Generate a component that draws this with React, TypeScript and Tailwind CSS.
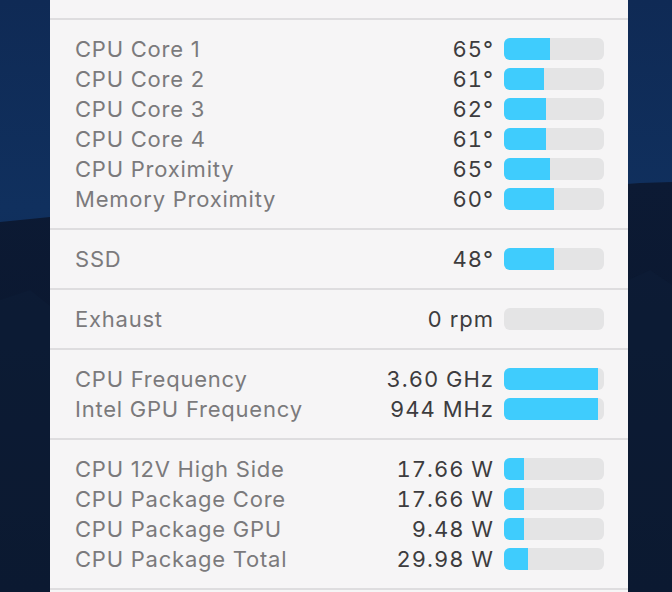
type Row = { label: string; value: string; fill: number };

const sections: Row[][] = [
  [
    { label: "CPU Core 1", value: "65°", fill: 46 },
    { label: "CPU Core 2", value: "61°", fill: 40 },
    { label: "CPU Core 3", value: "62°", fill: 42 },
    { label: "CPU Core 4", value: "61°", fill: 42 },
    { label: "CPU Proximity", value: "65°", fill: 46 },
    { label: "Memory Proximity", value: "60°", fill: 50 },
  ],
  [{ label: "SSD", value: "48°", fill: 50 }],
  [{ label: "Exhaust", value: "0 rpm", fill: 0 }],
  [
    { label: "CPU Frequency", value: "3.60 GHz", fill: 94 },
    { label: "Intel GPU Frequency", value: "944 MHz", fill: 94 },
  ],
  [
    { label: "CPU 12V High Side", value: "17.66 W", fill: 20 },
    { label: "CPU Package Core", value: "17.66 W", fill: 20 },
    { label: "CPU Package GPU", value: "9.48 W", fill: 20 },
    { label: "CPU Package Total", value: "29.98 W", fill: 24 },
  ],
];

function Wallpaper() {
  return (
    <svg
      className="absolute inset-0 h-full w-full"
      viewBox="0 0 672 592"
      preserveAspectRatio="none"
    >
      <defs>
        <linearGradient id="sky" x1="0" y1="0" x2="0" y2="1">
          <stop offset="0" stopColor="#0f2a55" />
          <stop offset="0.35" stopColor="#10305e" />
          <stop offset="1" stopColor="#0c2246" />
        </linearGradient>
        <linearGradient id="ridge" x1="0" y1="0" x2="0" y2="1">
          <stop offset="0" stopColor="#0c1a34" />
          <stop offset="1" stopColor="#09152a" />
        </linearGradient>
      </defs>
      <rect width="672" height="592" fill="url(#sky)" />
      <path
        d="M0 222 L20 220 L40 218 L60 216 L300 200 L600 186 L640 183 L672 182 L672 592 L0 592 Z"
        fill="url(#ridge)"
      />
      <path d="M0 300 L30 290 L55 310 L55 592 L0 592 Z" fill="#0e1d38" opacity="0.5" />
      <path d="M628 280 L650 270 L672 285 L672 592 L628 592 Z" fill="#0e1d38" opacity="0.5" />
    </svg>
  );
}

function Bar({ fill }: { fill: number }) {
  return (
    <div className="h-[22px] w-[100px] shrink-0 overflow-hidden rounded-[6px] bg-[#e4e4e5]">
      <div className="h-full bg-[#3fccfd]" style={{ width: `${fill}px` }} />
    </div>
  );
}

function Sensor({ row }: { row: Row }) {
  return (
    <div className="flex h-[30px] items-center">
      <span className="flex-1 text-[#7b7a7c]">{row.label}</span>
      <span className="text-[#3d3c3e] tabular-nums tracking-[0.045em]">{row.value}</span>
      <div className="ml-[10px]">
        <Bar fill={row.fill} />
      </div>
    </div>
  );
}

export default function App() {
  return (
    <div className="relative h-[592px] w-[672px] overflow-hidden">
      <Wallpaper />
      <div className="relative ml-[50px] mr-[44px] h-full bg-[#f6f5f6] font-['Inter',sans-serif] text-[22px] leading-none tracking-[0.035em]">
        <div className="h-[18px]" />
        {sections.map((rows, i) => (
          <div key={i}>
            <div className="h-[2px] bg-[#dedddf]" />
            <div className="py-[14px] pl-[25px] pr-[24px]">
              {rows.map((row) => (
                <Sensor key={row.label} row={row} />
              ))}
            </div>
          </div>
        ))}
        <div className="h-[2px] bg-[#dedddf]" />
      </div>
    </div>
  );
}
